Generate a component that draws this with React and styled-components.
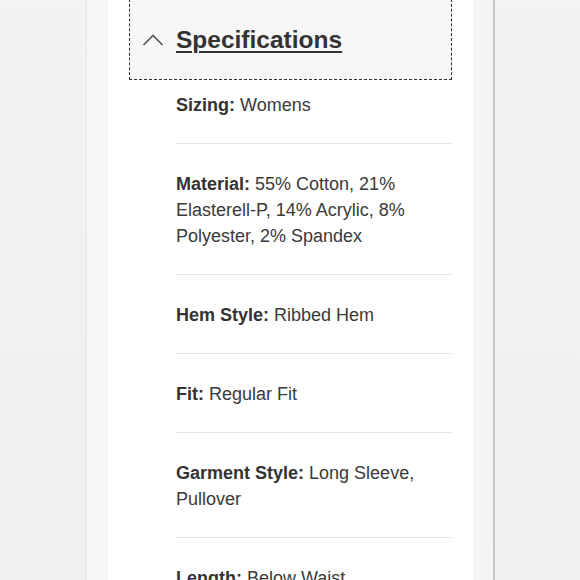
import React from "react";
import styled, { createGlobalStyle } from "styled-components";

const GlobalStyle = createGlobalStyle`
  html, body {
    margin: 0;
    padding: 0;
    background: #f1f1f1;
    font-family: "Liberation Sans", Arial, sans-serif;
  }
`;

const Page = styled.div`
  display: flex;
  height: 580px;
  overflow: hidden;
  padding-left: 87px;
  background: linear-gradient(180deg, #f3f3f3 0%, #efefef 100%);
`;

const Frame = styled.div`
  display: flex;
  height: 100%;
`;

const Band = styled.div`
  width: ${(p) => p.$w}px;
  background: ${(p) => p.$bg};
  border-right: ${(p) => (p.$edge ? "2px solid #c8c8c8" : "none")};
  box-shadow: ${(p) => (p.$shadow ? "-1px 0 2px rgba(0,0,0,0.05)" : "none")};
`;

const Content = styled.div`
  width: 323px;
  background: #ffffff;
  padding: 0 21px;
`;

const Header = styled.div`
  margin-top: -1px;
  height: 79px;
  border: 1px dashed #2e2e2e;
  background: #f7f7f7;
  display: flex;
  align-items: center;
  gap: 12px;
  padding-left: 12px;
`;

const Chevron = styled.svg`
  width: 22px;
  height: 13px;
  flex: none;
`;

const Title = styled.h2`
  margin: 0;
  font-size: 24.5px;
  font-weight: 700;
  color: #333;
  text-decoration: underline;
  text-decoration-thickness: 2px;
  text-underline-offset: 3px;
`;

const List = styled.ul`
  list-style: none;
  margin: 0 0 0 47px;
  padding: 0;
`;

const Row = styled.li`
  padding: ${(p) => (p.$first ? "12px" : "27px")} 0 25px;
  border-bottom: 1px solid #e8e8e8;
  font-size: 18px;
  line-height: 26px;
  color: #3a3a3a;
`;

const Label = styled.strong`
  font-weight: 700;
  color: #333;
`;

const specs = [
  ["Sizing", "Womens"],
  ["Material", "55% Cotton, 21% Elasterell-P, 14% Acrylic, 8% Polyester, 2% Spandex"],
  ["Hem Style", "Ribbed Hem"],
  ["Fit", "Regular Fit"],
  ["Garment Style", "Long Sleeve, Pullover"],
  ["Length", "Below Waist"],
];

export default function App() {
  return (
    <>
      <GlobalStyle />
      <Page>
        <Frame>
          <Band $w={21} $bg="#f7f7f7" $shadow />
          <Content>
            <Header>
              <Chevron viewBox="0 0 22 13">
                <polyline
                  points="1.5,12 11,2.5 20.5,12"
                  fill="none"
                  stroke="#555"
                  strokeWidth="1.6"
                />
              </Chevron>
              <Title>Specifications</Title>
            </Header>
            <List>
              {specs.map(([k, v], i) => (
                <Row key={k} $first={i === 0}>
                  <Label>{k}:</Label> {v}
                </Row>
              ))}
            </List>
          </Content>
          <Band $w={20} $bg="#f4f4f4" $edge />
        </Frame>
      </Page>
    </>
  );
}
